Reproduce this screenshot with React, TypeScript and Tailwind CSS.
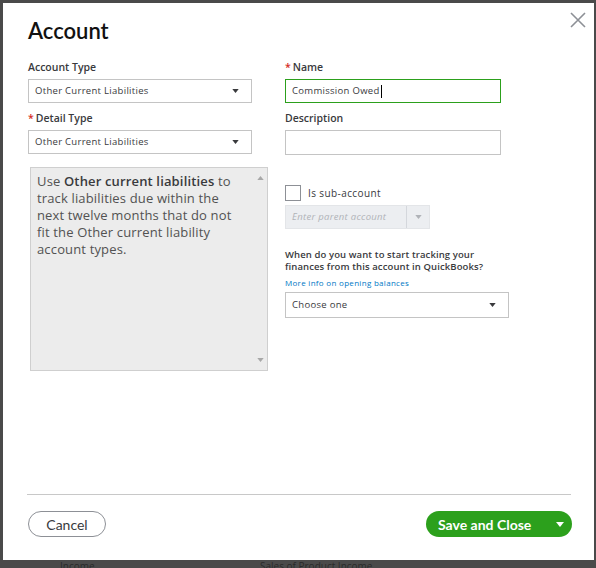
const body = { fontFamily: '"Open Sans", Lato, sans-serif' };
const head = { fontFamily: 'Lato, "Open Sans", sans-serif' };

function Caret({ className = '' }: { className?: string }) {
  return (
    <svg viewBox="0 0 8 5" className={`w-[7px] h-[4px] ${className}`}>
      <path d="M0 0 L8 0 L4 5 Z" fill="currentColor" />
    </svg>
  );
}

function Select({ value, width }: { value: string; width: string }) {
  return (
    <div
      className={`${width} h-[24px] border border-[#c4c4c4] bg-white flex items-center justify-between pl-[6px] pr-[12px]`}
    >
      <span className="text-[9.5px] tracking-[0.3px] text-[#393a3d]">{value}</span>
      <Caret className="text-[#393a3d]" />
    </div>
  );
}

function Label({ text, required }: { text: string; required?: boolean }) {
  return (
    <div className="text-[10.5px] font-semibold text-[#393a3d] leading-[14px] mb-[5px]">
      {required && <span className="text-[#d52b1e] mr-[2px]">*</span>}
      {text}
    </div>
  );
}

export default function App() {
  return (
    <div
      className="w-[596px] h-[568px] bg-[#4a4a4a] pt-[3px] pl-[3px] overflow-hidden relative"
      style={body}
    >
      <div className="w-[591px] h-[557px] bg-white relative flex flex-col px-[25px]">
        <button className="absolute right-[8px] top-[9px] text-[#8d9096]">
          <svg viewBox="0 0 16 16" className="w-[16px] h-[16px]">
            <path d="M1 1 L15 15 M15 1 L1 15" stroke="currentColor" strokeWidth="1.6" />
          </svg>
        </button>

        <h1 className="text-[22px] font-semibold text-[#111] mt-[14px] leading-[28px]" style={head}>
          Account
        </h1>

        <div className="flex mt-[15px] gap-[33px]">
          {/* left column */}
          <div className="flex flex-col w-[224px]">
            <Label text="Account Type" />
            <Select value="Other Current Liabilities" width="w-[224px]" />
            <div className="mt-[8px]">
              <Label text="Detail Type" required />
            </div>
            <Select value="Other Current Liabilities" width="w-[224px]" />
            <div className="mt-[13px] ml-[2px] w-[238px] h-[204px] bg-[#ececec] border border-[#cfcfcf] flex">
              <p className="flex-1 text-[13px] tracking-[0.15px] leading-[17px] text-[#525252] pl-[6px] pt-[5px] pr-[4px] whitespace-nowrap">
                Use <span className="font-semibold text-[#393a3d]">Other current liabilities</span> to
                <br />
                track liabilities due within the
                <br />
                next twelve months that do not
                <br />
                fit the Other current liability
                <br />
                account types.
              </p>
              <div className="w-[14px] flex flex-col justify-between items-center py-[8px] text-[#a8a8a8]">
                <svg viewBox="0 0 8 5" className="w-[7px] h-[4px]">
                  <path d="M0 5 L8 5 L4 0 Z" fill="currentColor" />
                </svg>
                <Caret />
              </div>
            </div>
          </div>

          {/* right column */}
          <div className="flex flex-col w-[224px]">
            <Label text="Name" required />
            <div className="w-[216px] h-[24px] border border-[#2ca01c] bg-white flex items-center pl-[6px]">
              <span className="text-[9.5px] tracking-[0.3px] text-[#393a3d]">Commission Owed</span>
              <span className="w-px h-[13px] bg-black ml-[1px]" />
            </div>
            <div className="mt-[8px]">
              <Label text="Description" />
            </div>
            <div className="w-[216px] h-[25px] border border-[#c4c4c4] bg-white" />

            <label className="flex items-center mt-[30px] gap-[7px]">
              <span className="w-[16px] h-[16px] border border-[#8d9096] bg-white" />
              <span className="text-[10px] tracking-[0.4px] text-[#393a3d]">Is sub-account</span>
            </label>
            <div className="mt-[4px] w-[145px] h-[24px] bg-[#eceef1] border border-[#e3e5e8] flex items-center">
              <span className="flex-1 pl-[6px] text-[9.5px] tracking-[0.3px] italic text-[#b0b3b8] whitespace-nowrap">
                Enter parent account
              </span>
              <span className="w-px h-full bg-[#d4d7dc]" />
              <span className="w-[22px] flex justify-center text-[#b0b3b8]">
                <Caret />
              </span>
            </div>

            <p className="mt-[20px] text-[9.5px] tracking-[0.1px] leading-[12px] font-semibold text-[#393a3d] w-[240px] whitespace-nowrap">
              When do you want to start tracking your
              <br />
              finances from this account in QuickBooks?
            </p>
            <a className="mt-[5px] text-[8px] tracking-[0.3px] text-[#0077c5] leading-[10px]">
              More info on opening balances
            </a>
            <div className="mt-[4px]">
              <Select value="Choose one" width="w-[224px] !h-[26px]" />
            </div>
          </div>
        </div>

        <div className="mt-auto border-t border-[#c8c8c8] mx-[-1px] w-[544px]" />
        <div
          className="flex justify-between items-center h-[26px] mt-[16px] mb-[23px] w-[544px]"
          style={head}
        >
          <button className="h-[26px] w-[78px] rounded-full border border-[#8d9096] text-[14px] text-[#393a3d] bg-white">
            Cancel
          </button>
          <button className="h-[26px] w-[146px] rounded-full bg-[#2ca01c] text-white text-[14px] font-bold flex items-center justify-between pl-[12px] pr-[8px]">
            <span>Save and Close</span>
            <Caret className="text-white w-[8px] h-[5px]" />
          </button>
        </div>
      </div>
      <div className="absolute left-[60px] top-[560px] text-[10px] leading-[12px] text-[#2a2a2a]">
        Income
      </div>
      <div className="absolute left-[260px] top-[560px] text-[10px] leading-[12px] text-[#2a2a2a]">
        Sales of Product Income
      </div>
    </div>
  );
}
